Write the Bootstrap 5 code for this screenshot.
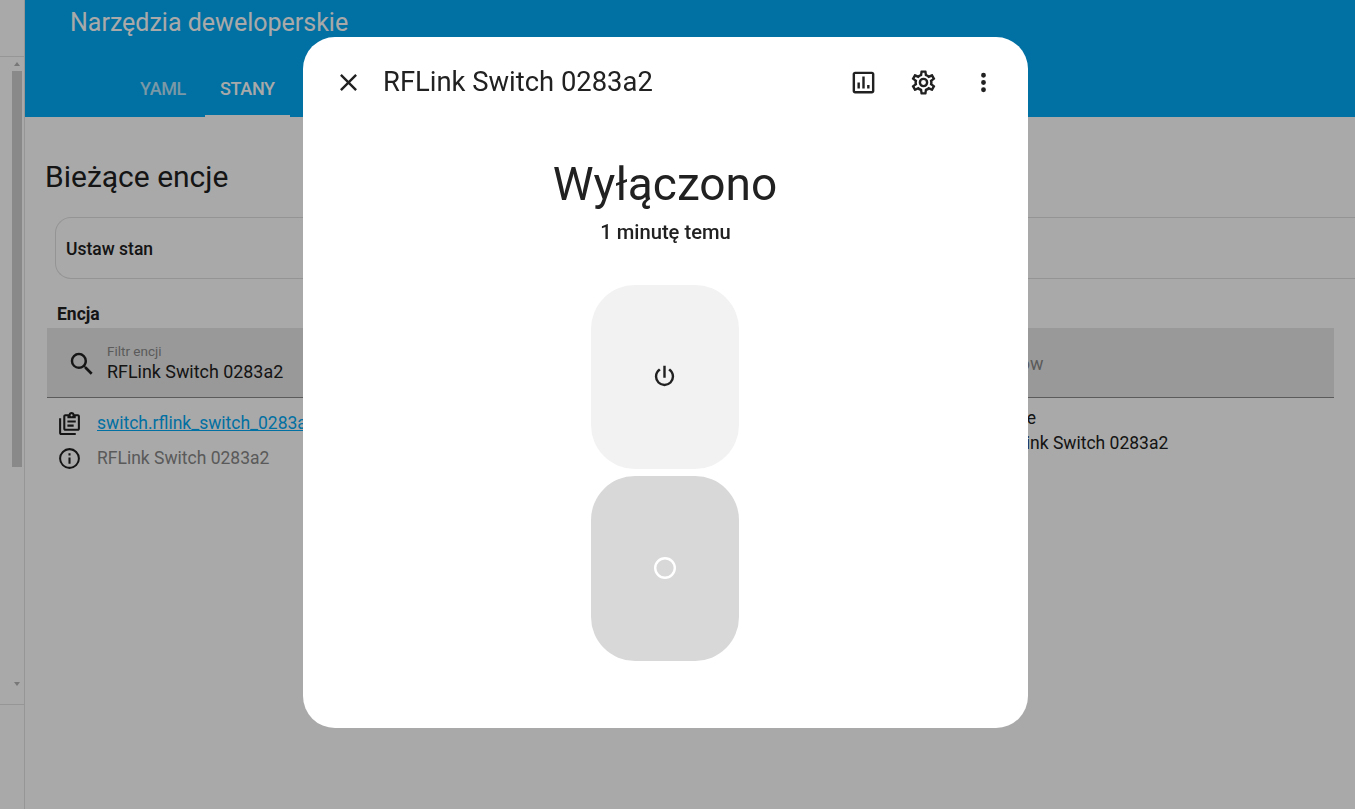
<!DOCTYPE html>
<html lang="pl">
<head>
    <meta charset="UTF-8">
    <meta name="viewport" content="width=device-width, initial-scale=1.0">
    <title>Narzędzia deweloperskie</title>
    <link href="https://cdn.jsdelivr.net/npm/bootstrap@5.3.0/dist/css/bootstrap.min.css" rel="stylesheet">
    <style>
        html, body { height: 100%; overflow: hidden; }
        body { font-family: Roboto, "Liberation Sans", sans-serif; color: #212121; background: #fff; font-size: 16px; }
        svg { fill: currentColor; display: block; flex: none; }

        .side-rail { width: 25px; flex: none; border-right: 1px solid #e2e2e2; }
        .rail-top { height: 57px; border-bottom: 1px solid #e2e2e2; }
        .rail-scroll { height: 648px; border-bottom: 1px solid #e2e2e2; padding: 3px 2px 0 12px; }
        .rail-thumb { height: 396px; background: #cfcfcf; margin-top: 5px; }
        .rail-up { width: 0; height: 0; margin: 2px 0 0 2px; border: 3.5px solid transparent; border-top: 0; border-bottom: 4px solid #b5b5b5; }
        .rail-down { width: 0; height: 0; margin: 215px 0 0 2px; border: 3.5px solid transparent; border-bottom: 0; border-top: 4px solid #b5b5b5; }

        .app-head { height: 117px; background: #03a9f4; color: #fff; padding-left: 45px; }
        .app-title { font-size: 25px; line-height: 28px; padding-top: 9px; height: 56px; }
        .tab-row { padding-left: 55px; height: 61px; gap: 4px; }
        .tab-item { padding: 19px 15px 0; font-size: 18px; font-weight: 500; letter-spacing: -.35px; color: rgba(255,255,255,.72); }
        .tab-item.is-on { color: #fff; border-bottom: 2px solid #fff; }

        .main-pane { padding: 0 21px 0 22px; }
        .pane-title { font-size: 30px; line-height: 36px; margin: 42px 0 0 -2px; font-weight: 400; }
        .state-box { height: 62px; margin: 22px -21px 0 8px; border: 1px solid #e0e0e0; border-right: 0; border-radius: 16px 0 0 16px; padding: 2px 10px 0; font-weight: 500; font-size: 17.5px; }
        .col-head { font-weight: 700; font-size: 17.5px; line-height: 20px; padding: 25px 0 4px 10px; }
        .filter-row { height: 70px; background: #e7e7e7; border-bottom: 1px solid #8a8a8a; }
        .filter-main { width: 831px; flex: none; }
        .filter-cell { width: 60px; flex: none; padding: 3px 0 0 20px; }
        .filter-label { font-size: 13.5px; line-height: 14px; color: #8a8a8a; padding-top: 3px; }
        .filter-value { font-size: 17.9px; line-height: 24px; margin-top: 2px; }
        .filter-ghost { font-size: 17.9px; color: #8a8a8a; padding: 3px 0 0 51px; }
        .ent-col { width: 831px; padding: 8px 0 0 10px; flex: none; }
        .ent-line { height: 35px; font-size: 17.5px; gap: 15px; }
        .ent-line a { color: #03a9f4; }
        .ent-line span { color: #888; }
        .attr-col { padding-top: 8px; font-size: 17.5px; line-height: 25px; }

        .scrim { position: fixed; inset: 0; background: rgba(0,0,0,.337); }
        .dlg-box { position: fixed; left: 303px; top: 37px; width: 725px; height: 691px; background: #fff; border-radius: 32px; }
        .dlg-head { height: 90px; padding: 0 0 0 30.5px; }
        .dlg-title { font-size: 27.4px; margin-left: 20.5px; padding-top: 2px; }
        .dlg-tools { gap: 31px; padding-right: 30.5px; }
        .dlg-state { font-size: 46px; line-height: 54px; margin-top: 30px; margin-right: 1px; }
        .dlg-ago { font-size: 20.2px; font-weight: 500; line-height: 24px; margin-top: 9px; }
        .tgl-stack { margin-top: 41px; gap: 7px; padding-right: 2px; }
        .tgl-btn { width: 148px; border-radius: 44px; }
        .tgl-on { height: 184px; background: #f2f2f2; padding-bottom: 1px; }
        .tgl-off { height: 185px; background: #d8d8d8; padding-bottom: 2px; }
        .off-ring { color: #fff; fill: none; }
    </style>
</head>
<body>
    <div class="d-flex h-100">
        <div class="side-rail">
            <div class="rail-top"></div>
            <div class="rail-scroll">
                <div class="rail-up"></div>
                <div class="rail-thumb"></div>
                <div class="rail-down"></div>
            </div>
        </div>

        <div class="flex-grow-1">
            <div class="app-head">
                <div class="app-title">Narzędzia deweloperskie</div>
                <div class="tab-row d-flex">
                    <div class="tab-item">YAML</div>
                    <div class="tab-item is-on">STANY</div>
                </div>
            </div>
            <div class="main-pane">
                <h1 class="pane-title">Bieżące encje</h1>
                <div class="state-box d-flex align-items-center">Ustaw stan</div>
                <div class="col-head">Encja</div>
                <div class="filter-row d-flex align-items-center">
                    <div class="filter-main d-flex align-items-center">
                        <div class="filter-cell">
                            <svg width="30" height="30" viewBox="0 0 24 24"><path d="M9.5,3A6.5,6.5 0 0,1 16,9.5C16,11.11 15.41,12.59 14.44,13.73L14.71,14H15.5L20.5,19L19,20.5L14,15.5V14.71L13.73,14.44C12.59,15.41 11.11,16 9.5,16A6.5,6.5 0 0,1 3,9.5A6.5,6.5 0 0,1 9.5,3M9.5,5C7,5 5,7 5,9.5C5,12 7,14 9.5,14C12,14 14,12 14,9.5C14,7 12,5 9.5,5Z"/></svg>
                        </div>
                        <div>
                            <div class="filter-label">Filtr encji</div>
                            <div class="filter-value">RFLink Switch 0283a2</div>
                        </div>
                    </div>
                    <div class="filter-ghost">Filtr atrybutów</div>
                </div>
                <div class="d-flex">
                    <div class="ent-col">
                        <div class="ent-line d-flex align-items-center">
                            <svg width="25" height="25" viewBox="0 0 24 24"><path d="M4 7V21H18V23H4C2.9 23 2 22.1 2 21V7H4M20 3C21.1 3 22 3.9 22 5V17C22 18.1 21.1 19 20 19H8C6.9 19 6 18.1 6 17V5C6 3.9 6.9 3 8 3H11.18C11.6 1.84 12.7 1 14 1C15.3 1 16.4 1.84 16.82 3H20M14 3C13.45 3 13 3.45 13 4S13.45 5 14 5 15 4.55 15 4 14.55 3 14 3M10 7V5H8V17H20V5H18V7H10M18 9H10V11H18V9M16 13H10V15H16V13Z"/></svg>
                            <a href="#">switch.rflink_switch_0283a2</a>
                        </div>
                        <div class="ent-line d-flex align-items-center">
                            <svg width="25" height="25" viewBox="0 0 24 24"><path d="M11,9H13V7H11M12,20C7.59,20 4,16.41 4,12C4,7.59 7.59,4 12,4C16.41,4 20,7.59 20,12C20,16.41 16.41,20 12,20M12,2A10,10 0 0,0 2,12A10,10 0 0,0 12,22A10,10 0 0,0 22,12A10,10 0 0,0 12,2M11,17H13V11H11V17Z"/></svg>
                            <span>RFLink Switch 0283a2</span>
                        </div>
                    </div>
                    <div class="attr-col">
                        <div>assumed_state: true</div>
                        <div>friendly_name: RFLink Switch 0283a2</div>
                    </div>
                </div>
            </div>
        </div>
    </div>

    <div class="scrim"></div>

    <div class="dlg-box d-flex flex-column">
        <div class="dlg-head d-flex align-items-center">
            <svg width="29" height="29" viewBox="0 0 24 24"><path d="M19,6.41L17.59,5L12,10.59L6.41,5L5,6.41L10.59,12L5,17.59L6.41,19L12,13.41L17.59,19L19,17.59L13.41,12L19,6.41Z"/></svg>
            <div class="dlg-title flex-grow-1">RFLink Switch 0283a2</div>
            <div class="dlg-tools d-flex">
                <svg width="29" height="29" viewBox="0 0 24 24"><path d="M9 17H7V12H9V17M13 17H11V7H13V17M17 17H15V14H17V17M19 19H5V5H19V19M19 3H5C3.9 3 3 3.9 3 5V19C3 20.1 3.9 21 5 21H19C20.1 21 21 20.1 21 19V5C21 3.9 20.1 3 19 3Z"/></svg>
                <svg width="29" height="29" viewBox="0 0 24 24"><path d="M12,8A4,4 0 0,1 16,12A4,4 0 0,1 12,16A4,4 0 0,1 8,12A4,4 0 0,1 12,8M12,10A2,2 0 0,0 10,12A2,2 0 0,0 12,14A2,2 0 0,0 14,12A2,2 0 0,0 12,10M10,22C9.75,22 9.54,21.82 9.5,21.58L9.13,18.93C8.5,18.68 7.96,18.34 7.44,17.94L4.95,18.95C4.73,19.03 4.46,18.95 4.34,18.73L2.34,15.27C2.21,15.05 2.27,14.78 2.46,14.63L4.57,12.97L4.5,12L4.57,11L2.46,9.37C2.27,9.22 2.21,8.95 2.34,8.73L4.34,5.27C4.46,5.05 4.73,4.96 4.95,5.05L7.44,6.05C7.96,5.66 8.5,5.32 9.13,5.07L9.5,2.42C9.54,2.18 9.75,2 10,2H14C14.25,2 14.46,2.18 14.5,2.42L14.87,5.07C15.5,5.32 16.04,5.66 16.56,6.05L19.05,5.05C19.27,4.96 19.54,5.05 19.66,5.27L21.66,8.73C21.79,8.95 21.73,9.22 21.54,9.37L19.43,11L19.5,12L19.43,13L21.54,14.63C21.73,14.78 21.79,15.05 21.66,15.27L19.66,18.73C19.54,18.95 19.27,19.04 19.05,18.95L16.56,17.95C16.04,18.34 15.5,18.68 14.87,18.93L14.5,21.58C14.46,21.82 14.25,22 14,22H10M11.25,4L10.88,6.61C9.68,6.86 8.62,7.5 7.85,8.39L5.44,7.35L4.69,8.65L6.8,10.2C6.4,11.37 6.4,12.64 6.8,13.8L4.68,15.36L5.43,16.66L7.86,15.62C8.63,16.5 9.68,17.14 10.87,17.38L11.24,20H12.76L13.13,17.39C14.32,17.14 15.37,16.5 16.14,15.62L18.57,16.66L19.32,15.36L17.2,13.81C17.6,12.64 17.6,11.37 17.2,10.2L19.31,8.65L18.56,7.35L16.15,8.39C15.38,7.5 14.32,6.86 13.12,6.62L12.75,4H11.25Z"/></svg>
                <svg width="29" height="29" viewBox="0 0 24 24"><path d="M12,16A2,2 0 0,1 14,18A2,2 0 0,1 12,20A2,2 0 0,1 10,18A2,2 0 0,1 12,16M12,10A2,2 0 0,1 14,12A2,2 0 0,1 12,14A2,2 0 0,1 10,12A2,2 0 0,1 12,10M12,4A2,2 0 0,1 14,6A2,2 0 0,1 12,8A2,2 0 0,1 10,6A2,2 0 0,1 12,4Z"/></svg>
            </div>
        </div>
        <div class="text-center">
            <div class="dlg-state">Wyłączono</div>
            <div class="dlg-ago">1 minutę temu</div>
        </div>
        <div class="tgl-stack d-flex flex-column align-items-center">
            <div class="tgl-btn tgl-on d-flex align-items-center justify-content-center">
                <svg width="29" height="29" viewBox="0 0 24 24"><path d="M16.56,5.44L15.11,6.89C16.84,7.94 18,9.83 18,12A6,6 0 0,1 12,18A6,6 0 0,1 6,12C6,9.83 7.16,7.94 8.88,6.88L7.44,5.44C5.36,6.88 4,9.28 4,12A8,8 0 0,0 12,20A8,8 0 0,0 20,12C20,9.28 18.64,6.88 16.56,5.44M13,3H11V13H13V3Z"/></svg>
            </div>
            <div class="tgl-btn tgl-off d-flex align-items-center justify-content-center">
                <svg class="off-ring" width="24" height="24" viewBox="0 0 24 24"><circle cx="12" cy="12" r="9.8" stroke="currentColor" stroke-width="2.4"/></svg>
            </div>
        </div>
    </div>

    <script src="https://cdn.jsdelivr.net/npm/bootstrap@5.3.0/dist/js/bootstrap.bundle.min.js"></script>
</body>
</html>
